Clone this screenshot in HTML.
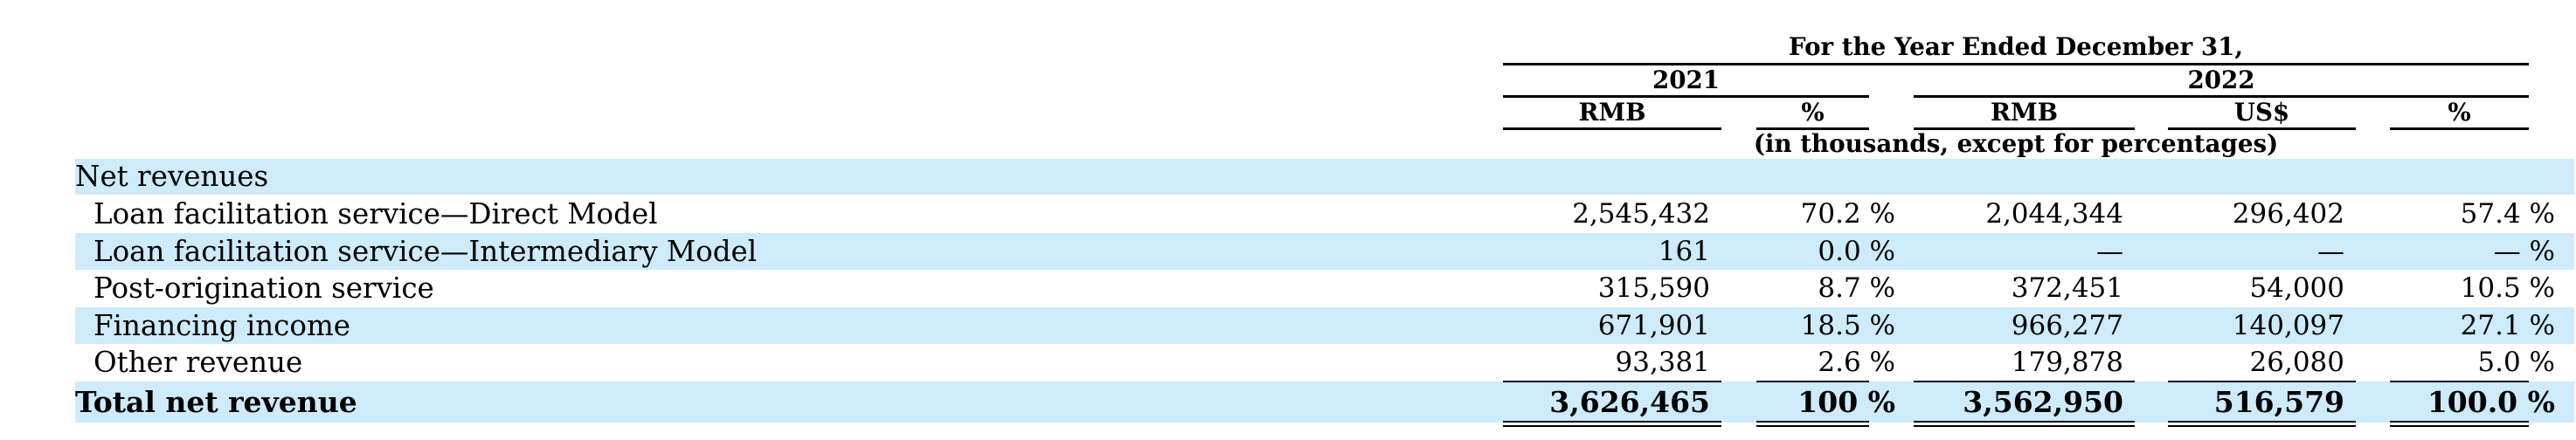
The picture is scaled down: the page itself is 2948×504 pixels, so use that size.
<!DOCTYPE html>
<html><head><meta charset="utf-8"><style>
*{margin:0;padding:0;box-sizing:border-box}
body{width:2948px;height:504px;background:#fff;position:relative;overflow:hidden;font-family:"DejaVu Serif","Liberation Serif",serif;color:#000}
.a{position:absolute;white-space:nowrap}
.h{font-weight:bold;font-size:27.7px;text-align:center}
.ln{position:absolute;height:3px;background:#000}
.band{position:absolute;left:86px;width:2860px;background:#cdebfb}
.r{position:absolute;font-size:31px;white-space:nowrap;text-align:right}
.l{position:absolute;font-size:32.5px;white-space:nowrap}
.b{font-weight:bold;font-size:33px}
</style></head><body>
<div class="a h" style="left:1720px;width:1174px;top:37px">For the Year Ended December 31,</div>
<div class="ln" style="left:1720px;width:1174px;top:72px"></div>
<div class="a h" style="left:1720px;width:419px;top:75px">2021</div>
<div class="a h" style="left:2190px;width:704px;top:75px">2022</div>
<div class="ln" style="left:1720px;width:419px;top:109px"></div>
<div class="ln" style="left:2190px;width:704px;top:109px"></div>
<div class="a h" style="left:1720px;width:250px;top:112px">RMB</div>
<div class="a h" style="left:2010px;width:129px;top:112px">%</div>
<div class="a h" style="left:2190px;width:253px;top:112px">RMB</div>
<div class="a h" style="left:2481px;width:215px;top:112px">US$</div>
<div class="a h" style="left:2735px;width:159px;top:112px">%</div>
<div class="ln" style="left:1720px;width:250px;top:146px"></div>
<div class="ln" style="left:2010px;width:129px;top:146px"></div>
<div class="ln" style="left:2190px;width:253px;top:146px"></div>
<div class="ln" style="left:2481px;width:215px;top:146px"></div>
<div class="ln" style="left:2735px;width:159px;top:146px"></div>
<div class="a h" style="left:1720px;width:1174px;top:148px">(in thousands, except for percentages)</div>

<div class="band" style="top:182px;height:41px"></div>
<div class="band" style="top:267px;height:42px"></div>
<div class="band" style="top:352px;height:42px"></div>
<div class="band" style="top:437px;height:47px"></div>

<div class="l" style="left:86px;top:183px">Net revenues</div>
<div class="l" style="left:107px;top:226px">Loan facilitation service—Direct Model</div>
<div class="l" style="left:107px;top:269px">Loan facilitation service—Intermediary Model</div>
<div class="l" style="left:107px;top:311px">Post-origination service</div>
<div class="l" style="left:107px;top:354px">Financing income</div>
<div class="l" style="left:107px;top:396px">Other revenue</div>
<div class="l b" style="left:86px;top:441px">Total net revenue</div>

<div class="r" style="right:991px;top:227px">2,545,432</div>
<div class="r" style="right:779px;top:227px">70.2 %</div>
<div class="r" style="right:518px;top:227px">2,044,344</div>
<div class="r" style="right:265px;top:227px">296,402</div>
<div class="r" style="right:24px;top:227px">57.4 %</div>

<div class="r" style="right:991px;top:270px">161</div>
<div class="r" style="right:779px;top:270px">0.0 %</div>
<div class="r" style="right:518px;top:270px">—</div>
<div class="r" style="right:265px;top:270px">—</div>
<div class="r" style="right:24px;top:270px">— %</div>

<div class="r" style="right:991px;top:312px">315,590</div>
<div class="r" style="right:779px;top:312px">8.7 %</div>
<div class="r" style="right:518px;top:312px">372,451</div>
<div class="r" style="right:265px;top:312px">54,000</div>
<div class="r" style="right:24px;top:312px">10.5 %</div>

<div class="r" style="right:991px;top:355px">671,901</div>
<div class="r" style="right:779px;top:355px">18.5 %</div>
<div class="r" style="right:518px;top:355px">966,277</div>
<div class="r" style="right:265px;top:355px">140,097</div>
<div class="r" style="right:24px;top:355px">27.1 %</div>

<div class="r" style="right:991px;top:397px">93,381</div>
<div class="r" style="right:779px;top:397px">2.6 %</div>
<div class="r" style="right:518px;top:397px">179,878</div>
<div class="r" style="right:265px;top:397px">26,080</div>
<div class="r" style="right:24px;top:397px">5.0 %</div>

<div class="r b" style="right:991px;top:441px">3,626,465</div>
<div class="r b" style="right:779px;top:441px">100 %</div>
<div class="r b" style="right:518px;top:441px">3,562,950</div>
<div class="r b" style="right:265px;top:441px">516,579</div>
<div class="r b" style="right:24px;top:441px">100.0 %</div>

<div class="ln" style="left:1720px;width:250px;top:436px;height:2px"></div>
<div class="ln" style="left:2010px;width:129px;top:436px;height:2px"></div>
<div class="ln" style="left:2190px;width:253px;top:436px;height:2px"></div>
<div class="ln" style="left:2481px;width:215px;top:436px;height:2px"></div>
<div class="ln" style="left:2735px;width:159px;top:436px;height:2px"></div>

<div class="ln" style="left:1720px;width:250px;top:482px;height:2px"></div>
<div class="ln" style="left:2010px;width:129px;top:482px;height:2px"></div>
<div class="ln" style="left:2190px;width:253px;top:482px;height:2px"></div>
<div class="ln" style="left:2481px;width:215px;top:482px;height:2px"></div>
<div class="ln" style="left:2735px;width:159px;top:482px;height:2px"></div>
<div class="ln" style="left:1720px;width:250px;top:487px;height:2px"></div>
<div class="ln" style="left:2010px;width:129px;top:487px;height:2px"></div>
<div class="ln" style="left:2190px;width:253px;top:487px;height:2px"></div>
<div class="ln" style="left:2481px;width:215px;top:487px;height:2px"></div>
<div class="ln" style="left:2735px;width:159px;top:487px;height:2px"></div>
</body></html>
